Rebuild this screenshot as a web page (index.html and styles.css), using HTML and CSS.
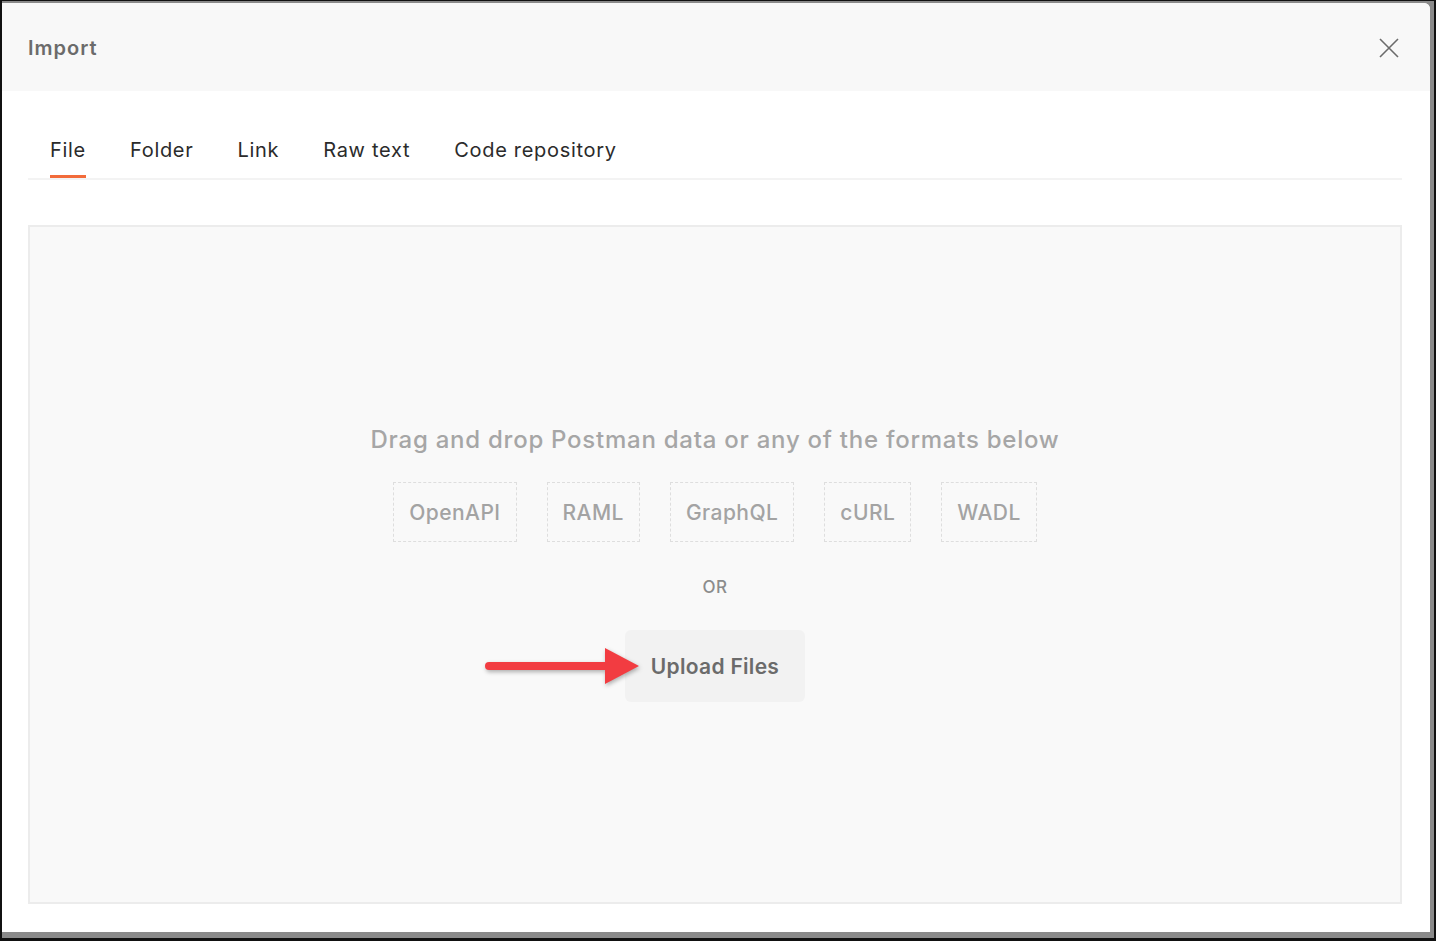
FILE: index.html
```html
<!DOCTYPE html>
<html lang="en">
<head>
    <meta charset="UTF-8">
    <meta name="viewport" content="width=device-width, initial-scale=1.0">
    <title>Import</title>
    <link rel="stylesheet" href="styles.css">
</head>
<body>
    <div class="frame">
        <div class="modal">
            <header class="modal-header">
                <h1>Import</h1>
                <button class="close-btn" aria-label="Close">
                    <svg width="20" height="20" viewBox="0 0 20 20">
                        <path d="M1 1 L19 19 M19 1 L1 19" stroke="#6b6b6b" stroke-width="1.6" fill="none"/>
                    </svg>
                </button>
            </header>

            <nav class="tabs">
                <ul>
                    <li class="active">File</li>
                    <li>Folder</li>
                    <li>Link</li>
                    <li>Raw text</li>
                    <li>Code repository</li>
                </ul>
            </nav>

            <main class="drop-zone">
                <h2>Drag and drop Postman data or any of the formats below</h2>
                <div class="formats">
                    <span class="format">OpenAPI</span>
                    <span class="format">RAML</span>
                    <span class="format">GraphQL</span>
                    <span class="format">cURL</span>
                    <span class="format">WADL</span>
                </div>
                <p class="or">OR</p>
                <div class="upload-wrap">
                    <!-- annotation arrow pointing at the button -->
                    <svg class="arrow" width="160" height="40" viewBox="0 0 160 40">
                        <path d="M6 20 L128 20" stroke="#f23c41" stroke-width="8" stroke-linecap="round"/>
                        <polygon points="122,2 156,20 122,38" fill="#f23c41"/>
                    </svg>
                    <button class="upload-btn">Upload Files</button>
                </div>
            </main>
        </div>
    </div>
</body>
</html>
```

FILE: styles.css
```css
html, body {
    margin: 0;
    padding: 0;
    height: 100%;
}

body {
    font-family: Inter, "Noto Sans", sans-serif;
    background: #fff;
}

.frame {
    box-sizing: border-box;
    height: 941px;
    background: #8a8a8a;
    border-style: solid;
    border-color: #111;
    border-width: 1px 2px 3px 2px;
    padding: 2px 4px 6px 0;
}

.modal {
    background: #fff;
    height: 100%;
    border-radius: 0 6px 0 0;
    display: flex;
    flex-direction: column;
    overflow: hidden;
}

.modal-header {
    background: #f8f8f8;
    height: 88px;
    display: flex;
    align-items: center;
    justify-content: space-between;
    padding: 2px 31px 0 26px;
    box-sizing: border-box;
    flex-shrink: 0;
}

.modal-header h1 {
    margin: 0;
    font-size: 20px;
    font-weight: 600;
    letter-spacing: 1px;
    color: #6b6b6b;
}

.close-btn {
    background: none;
    border: none;
    padding: 0;
    cursor: pointer;
    display: flex;
}

.tabs {
    margin: 0 28px 0 26px;
    padding-top: 47px;
    border-bottom: 2px solid #f3f3f3;
}

.tabs ul {
    list-style: none;
    margin: 0;
    padding: 0;
    display: flex;
}

.tabs li {
    margin: 0 22px;
    padding-bottom: 13px;
    font-size: 20px;
    line-height: 24px;
    letter-spacing: 0.7px;
    color: #2b2b2b;
    border-bottom: 3px solid transparent;
    cursor: pointer;
}

.tabs li.active {
    border-bottom-color: #f26b3a;
}

.drop-zone {
    margin: 45px 28px 28px 26px;
    padding-bottom: 2px;
    flex: 1;
    background: #f9f9f9;
    border: 2px solid #ececec;
    display: flex;
    flex-direction: column;
    align-items: center;
    justify-content: center;
}

.drop-zone h2 {
    margin: 0;
    font-size: 24px;
    line-height: 30px;
    font-weight: 500;
    letter-spacing: 0.75px;
    color: #a6a6a6;
}

.formats {
    display: flex;
    gap: 30px;
    margin-top: 27px;
}

.format {
    height: 60px;
    box-sizing: border-box;
    padding: 0 15px;
    border: 1px dashed #dedede;
    display: flex;
    align-items: center;
    font-size: 21px;
    font-weight: 500;
    letter-spacing: 0.45px;
    color: #a3a3a3;
}

.or {
    margin: 34px 0 0;
    font-size: 17px;
    line-height: 22px;
    font-weight: 500;
    letter-spacing: 0.5px;
    color: #8c8c8c;
}

.upload-wrap {
    position: relative;
    margin-top: 32px;
}

.upload-btn {
    width: 180px;
    height: 72px;
    background: #f2f2f2;
    border: none;
    border-radius: 6px;
    font-family: inherit;
    font-size: 21px;
    font-weight: 600;
    letter-spacing: 0.3px;
    color: #6b6b6b;
    cursor: pointer;
}

.arrow {
    position: absolute;
    left: -142px;
    top: 16px;
    filter: drop-shadow(1px 2px 2px rgba(0, 0, 0, 0.3));
}
```
